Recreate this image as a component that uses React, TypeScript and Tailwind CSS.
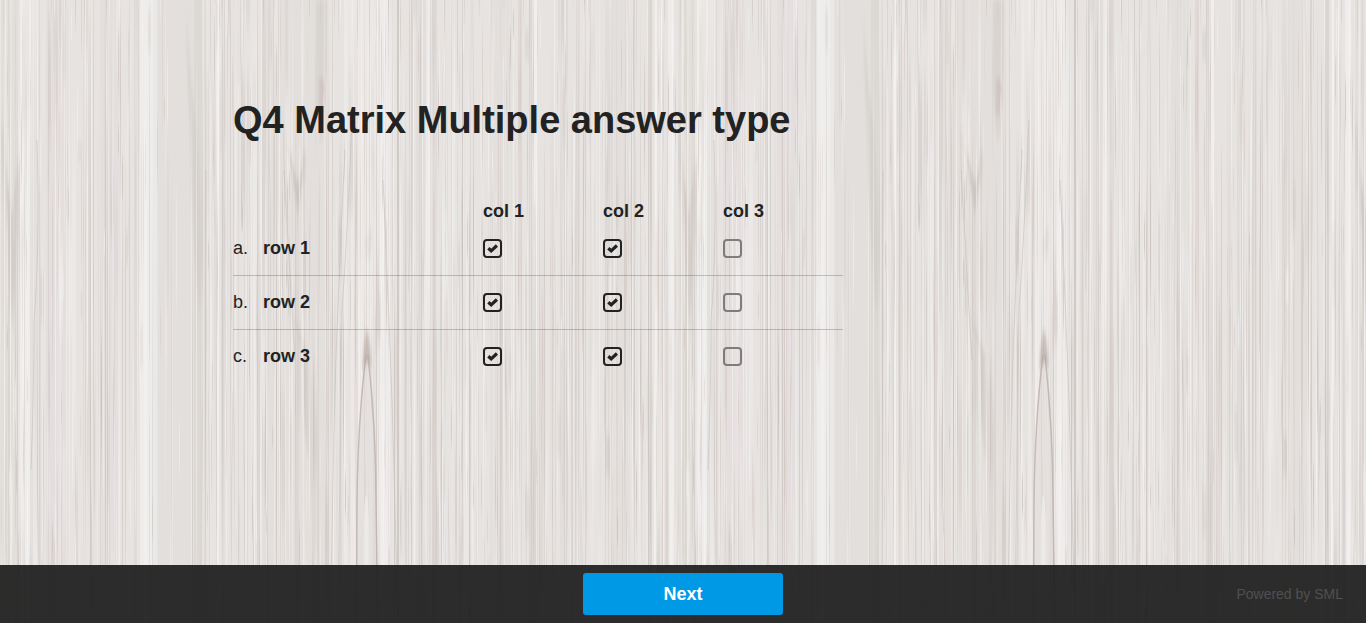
import { useMemo, useState } from "react";

const TILE_WIDTH = 677;
const TILE_HEIGHT = 960;

type Band = { x: number; w: number; color: string; opacity: number };

// Broad light and dark boards of the grain, across one tile.
const BANDS: Band[] = [
  { x: 0, w: 18, color: "#d8d3cf", opacity: 0.35 },
  { x: 20, w: 12, color: "#f3f2f0", opacity: 0.7 },
  { x: 32, w: 6, color: "#efedec", opacity: 0.6 },
  { x: 46, w: 22, color: "#dedad7", opacity: 0.3 },
  { x: 100, w: 20, color: "#dedad7", opacity: 0.3 },
  { x: 134, w: 4, color: "#d4cfcb", opacity: 0.4 },
  { x: 140, w: 13, color: "#f1f0ef", opacity: 0.75 },
  { x: 153, w: 4, color: "#eeeceb", opacity: 0.6 },
  { x: 158, w: 44, color: "#dfdbd7", opacity: 0.5 },
  { x: 194, w: 8, color: "#cfcac6", opacity: 0.35 },
  { x: 217, w: 2, color: "#f5f4f3", opacity: 0.7 },
  { x: 262, w: 66, color: "#dcd7d3", opacity: 0.35 },
  { x: 344, w: 8, color: "#f5f4f3", opacity: 0.4 },
  { x: 352, w: 26, color: "#efeeec", opacity: 0.5 },
  { x: 380, w: 8, color: "#f5f4f3", opacity: 0.5 },
  { x: 397, w: 2, color: "#c6bfbb", opacity: 0.7 },
  { x: 416, w: 12, color: "#dad5d2", opacity: 0.3 },
  { x: 490, w: 22, color: "#e0dcd9", opacity: 0.5 },
  { x: 529, w: 3, color: "#d0cac6", opacity: 0.5 },
  { x: 534, w: 3, color: "#f5f4f3", opacity: 0.7 },
  { x: 612, w: 18, color: "#dfdbd8", opacity: 0.5 },
  { x: 649, w: 3, color: "#d0cbc7", opacity: 0.6 },
  { x: 654, w: 3, color: "#f5f4f3", opacity: 0.7 },
  { x: 668, w: 6, color: "#f3f2f1", opacity: 0.7 },
];

const GRAIN_COLORS = ["#f7f6f5", "#c0b7b3", "#f3f2f1", "#cac2be", "#d2c3be", "#f7f6f5", "#cdc9c5"];

function createRandom(seed: number) {
  let state = seed;
  return () => {
    state = (state * 1664525 + 1013904223) % 4294967296;
    return state / 4294967296;
  };
}

function createStreaks() {
  const random = createRandom(71);
  return Array.from({ length: 1900 }, (_, i) => {
    let x = Math.floor(random() * TILE_WIDTH);
    // The smooth boards carry few fine lines.
    if (x > 138 && x < 204 && random() < 0.75) x = 216 + Math.floor(random() * 320);
    const long = i % 6 === 0;
    const y = long ? -150 + random() * 400 : -100 + random() * (TILE_HEIGHT + 40);
    const length = long ? 350 + random() * 500 : 30 + random() * 150;
    const color = Math.floor(random() * GRAIN_COLORS.length);
    const width = random() < 0.78 ? 1 : 2 + Math.floor(random() * 3);
    const opacity = width > 1 ? 0.15 + random() * 0.2 : 0.2 + random() * 0.4;
    return { x, y, length, color, width, opacity };
  });
}

function WoodBackground() {
  const streaks = useMemo(createStreaks, []);
  return (
    <svg aria-hidden="true" className="absolute inset-0 h-full w-full">
      <defs>
        {GRAIN_COLORS.map((color, i) => (
          <linearGradient key={i} id={`grain-${i}`} x1="0" y1="0" x2="0" y2="1">
            <stop offset="0" stopColor={color} stopOpacity="0" />
            <stop offset="0.3" stopColor={color} />
            <stop offset="0.7" stopColor={color} />
            <stop offset="1" stopColor={color} stopOpacity="0" />
          </linearGradient>
        ))}
        <filter id="soften" x="-20%" y="-5%" width="140%" height="110%">
          <feGaussianBlur stdDeviation="1 3" />
        </filter>
        <pattern id="wood" width={TILE_WIDTH} height={TILE_HEIGHT} patternUnits="userSpaceOnUse">
          <rect width={TILE_WIDTH} height={TILE_HEIGHT} fill="#e6e3e1" />
          {BANDS.map((b) => (
            <rect key={b.x} x={b.x} width={b.w} height={TILE_HEIGHT} fill={b.color} opacity={b.opacity} />
          ))}
          <g fill="#c9c2be" filter="url(#soften)">
            <path d="M2 120Q5 220 12 335Q17 240 20 140Q14 200 12 215Q8 190 2 120Z" opacity=".6" />
            <path d="M187 10Q188 60 197 130Q204 240 200 320Q191 230 190 130Q186 60 187 10Z" opacity=".4" />
            <path d="M287 140Q293 180 298 216Q303 180 306 145Q300 180 298 185Q294 170 287 140Z" opacity=".8" />
            <path d="M316 0H327Q325 90 325 100Q324 125 321 145Q317 120 316 90Z" opacity=".4" />
            <path d="M319 78Q325 75 326 95Q323 125 319 112Z" fill="#c9b8b5" opacity=".5" />
            <path d="M292 310Q300 335 308 355L309 460Q305 450 303 350Q297 335 292 310Z" opacity=".55" />
            <path d="M365 240Q370 235 371 220Q373 250 367 265Z" opacity=".35" />
            <path d="M680 120Q683 260 689 335Q693 250 695 140Z" opacity=".5" />
          </g>
          {streaks.map((s, i) => (
            <rect
              key={i}
              x={s.x}
              y={s.y}
              width={s.width}
              height={s.length}
              fill={`url(#grain-${s.color})`}
              opacity={s.opacity}
            />
          ))}
          <g fill="none" stroke="#c8c0bc" opacity=".65">
            <path d="M37 140Q40 250 34 320Q34 390 31 470" />
            <path d="M345 150Q341 230 337 330Q333 430 331 620" />
            <path d="M352 120Q347 240 342 310L338 620" />
            <path d="M383 180Q387 270 392 400L398 620" />
            <path d="M206 170L205 620M284 170Q289 260 295 360" />
          </g>
          <path d="M367 345Q361 358 363 372Q358 410 356 623H378Q376 430 371 372Q372 355 367 345Z" fill="#ddd9d6" opacity=".55" />
          <path d="M367 328Q362 352 363 372Q367 354 371 370Q372 352 367 328Z" fill="#b5a8a2" opacity=".65" filter="url(#soften)" />
          <path d="M366 355Q358 420 357 500L356 640M368 355Q376 430 376 500L378 640" fill="none" stroke="#b8aba6" strokeWidth="1.5" opacity=".75" />
          <path d="M364 520Q366 470 369 520L370 640H363Z" fill="#f1f0ef" opacity=".6" />
        </pattern>
      </defs>
      <rect width="100%" height="100%" fill="url(#wood)" />
    </svg>
  );
}

function CheckBox({ checked, onChange, labelledBy }: { checked: boolean; onChange: () => void; labelledBy: string }) {
  return (
    <span className="relative block size-[19px]">
      <input
        type="checkbox"
        checked={checked}
        onChange={onChange}
        aria-labelledby={labelledBy}
        className="block size-full cursor-pointer appearance-none rounded border-2 border-[#7f7d7c] checked:border-[#222]"
      />
      {checked && (
        <svg viewBox="0 0 19 19" aria-hidden="true" className="pointer-events-none absolute inset-0 size-full">
          <path d="M5.3 9.2L8.2 11.8L13.9 6.5" fill="none" stroke="#222" strokeWidth="3.2" />
        </svg>
      )}
    </span>
  );
}

const COLUMNS = ["col 1", "col 2", "col 3"];
const ROWS = [
  { letter: "a.", name: "row 1" },
  { letter: "b.", name: "row 2" },
  { letter: "c.", name: "row 3" },
];

export default function App() {
  const [answers, setAnswers] = useState(ROWS.map(() => [true, true, false]));

  const toggle = (row: number, col: number) =>
    setAnswers((prev) => prev.map((cells, r) => cells.map((v, c) => (r === row && c === col ? !v : v))));

  return (
    <div className="relative isolate flex min-h-screen flex-col bg-[#e6e3e1] font-['Liberation_Sans',Arial,sans-serif] text-lg text-[#222]">
      <div className="absolute inset-0 -z-10 overflow-hidden">
        <WoodBackground />
      </div>

      <main className="mx-auto w-full max-w-[900px] flex-1 pt-24">
        <h1 className="text-[38px] leading-12 font-bold">Q4 Matrix Multiple answer type</h1>

        <table className="mt-14 w-full max-w-[610px] table-fixed border-separate border-spacing-0 text-left">
          <colgroup>
            <col className="w-[30px]" />
            <col />
            <col className="w-[120px]" />
            <col className="w-[120px]" />
            <col className="w-[120px]" />
          </colgroup>
          <thead>
            <tr className="h-[22px] leading-[22px]">
              <td colSpan={2} className="p-0" />
              {COLUMNS.map((name, c) => (
                <th key={name} id={`col-${c}`} scope="col" className="p-0 font-bold">
                  {name}
                </th>
              ))}
            </tr>
          </thead>
          <tbody className="leading-6 *:*:border-b *:*:border-black/20 *:last:*:border-transparent">
            {ROWS.map((row, r) => (
              <tr key={row.name} className="h-[54px]">
                <td className="p-0 pb-0.5">{row.letter}</td>
                <th id={`row-${r}`} scope="row" className="p-0 pb-0.5 font-bold">
                  {row.name}
                </th>
                {COLUMNS.map((name, c) => (
                  <td key={name} className="p-0">
                    <CheckBox
                      checked={answers[r][c]}
                      onChange={() => toggle(r, c)}
                      labelledBy={`row-${r} col-${c}`}
                    />
                  </td>
                ))}
              </tr>
            ))}
          </tbody>
        </table>
      </main>

      <footer className="grid grid-cols-[1fr_auto_1fr] items-center bg-[#222]/95 px-[23px] py-2">
        <button
          type="button"
          className="col-start-2 h-[42px] w-[200px] cursor-pointer rounded-[3px] bg-[#0099e5] font-bold text-white"
        >
          Next
        </button>
        <p className="justify-self-end text-sm text-[#505050]">Powered by SML</p>
      </footer>
    </div>
  );
}
